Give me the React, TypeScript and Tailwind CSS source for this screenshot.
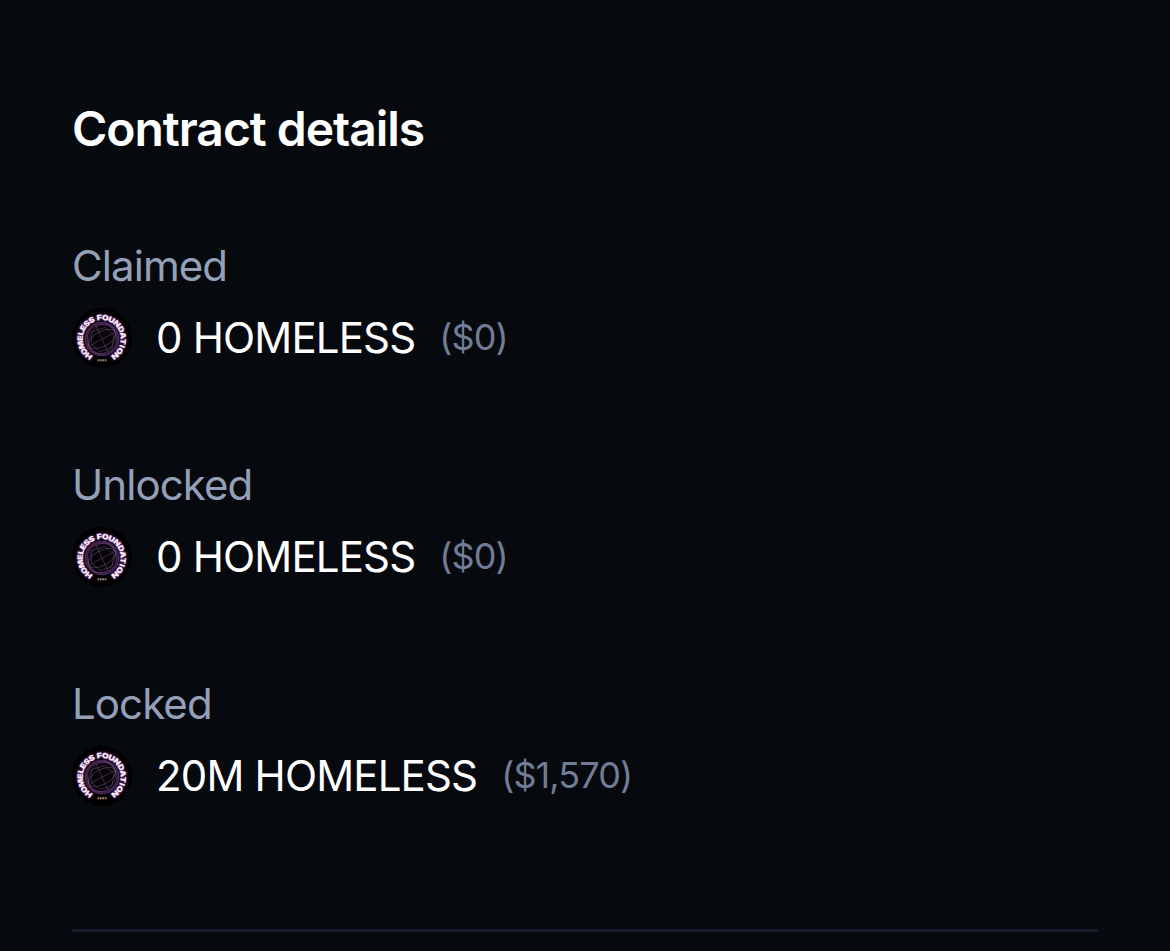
import React, { useId } from "react"

interface ContractRow {
  label: string
  amount: string
  value: string
}

const rows: ContractRow[] = [
  { label: "Claimed", amount: "0 HOMELESS", value: "($0)" },
  { label: "Unlocked", amount: "0 HOMELESS", value: "($0)" },
  { label: "Locked", amount: "20M HOMELESS", value: "($1,570)" },
]

// Relative letter widths, used to spread the name round the globe
const LETTER_WIDTHS: Record<string, number> = {
  H: 1, O: 1.05, M: 1.2, E: 0.85, L: 0.8, S: 0.9, " ": 0.4, F: 0.8,
  U: 1, N: 1.05, D: 1, A: 1, T: 0.9, I: 0.55,
}

const getRingLetters = (name: string, start: number, degreesPerUnit: number) => {
  let offset = -LETTER_WIDTHS[name[0]] / 2
  return name.split("").map((char) => {
    const width = LETTER_WIDTHS[char]
    const angle = start + (offset + width / 2) * degreesPerUnit
    offset += width
    return { char, angle }
  })
}

const ringLetters = getRingLetters("HOMELESS FOUNDATION", -143, 17.4)

function RingText() {
  return (
    <>
      {ringLetters.map(({ char, angle }, i) => (
        <text
          key={i}
          textAnchor="middle"
          transform={`translate(29.700 31) rotate(${angle}) translate(0 -18.900) scale(1.180 1)`}
          className="font-['Inter',sans-serif] text-[7.500px] font-black"
        >
          {char}
        </text>
      ))}
    </>
  )
}

function TokenLogo() {
  const glowId = useId()

  return (
    <svg viewBox="0 0 60 60" className="size-[60px] shrink-0" aria-hidden="true">
      <defs>
        <filter id={glowId} x="-20%" y="-20%" width="140%" height="140%">
          <feGaussianBlur stdDeviation="0.9" />
        </filter>
      </defs>
      <circle cx="30" cy="30" r="30" fill="#000000" />

      {/* globe */}
      <circle cx="30" cy="31" r="15.800" fill="#0d0512" stroke="#5a2d72" strokeWidth="2.400" opacity="0.6" />
      <g fill="none" stroke="#93589f" strokeWidth="0.500" opacity="0.65">
        <circle cx="30" cy="31" r="16.800" />
        <circle cx="30" cy="31" r="14.800" />
        <ellipse cx="30" cy="31" rx="16" ry="12.500" transform="rotate(-58 30 31)" />
      </g>
      <g fill="none" stroke="#9c8ca0" strokeWidth="0.450" opacity="0.7">
        <ellipse cx="30" cy="31" rx="15" ry="7.500" transform="rotate(-28 30 31)" />
        <path d="M18 37.500 43 24.500M24 18l12 26M20 23.500l13-4 9 8-2 12-12 4-9-8z" />
      </g>

      <g fill="#a94fc0" stroke="#a94fc0" strokeWidth="0.800" opacity="0.7" filter={`url(#${glowId})`}>
        <RingText />
      </g>
      <g fill="#fcf0fd">
        <RingText />
      </g>
      <path d="M25.500 52.300h9" stroke="#b09482" strokeWidth="2" strokeDasharray="1.800 0.600" opacity="0.9" />
    </svg>
  )
}

export default function App() {
  return (
    <div className="h-[951px] w-full overflow-hidden bg-[#06090e] px-[72px] pt-[93px] font-['Inter',sans-serif]">
      <h2 className="text-[48px] leading-[72px] font-semibold tracking-[-0.0215em] text-white">
        Contract details
      </h2>

      <dl className="mt-[71px] flex flex-col gap-[87px]">
        {rows.map((row) => (
          <div key={row.label} className="flex flex-col gap-3">
            <dt className="text-[42px] leading-[60px] tracking-[-0.022em] text-[#94a0b8]">{row.label}</dt>
            <dd className="flex h-[60px] items-center">
              <TokenLogo />
              <span className="ml-6 text-[42px] leading-[60px] tracking-[-0.02em] text-white">{row.amount}</span>
              <span className="ml-6 pb-0.5 text-[36px] leading-[60px] tracking-[-0.025em] text-[#717d96]">{row.value}</span>
            </dd>
          </div>
        ))}
      </dl>

      <hr className="mt-[123px] w-[1026px] border-0 border-t-3 border-[#1a1c2b]" />
    </div>
  )
}
